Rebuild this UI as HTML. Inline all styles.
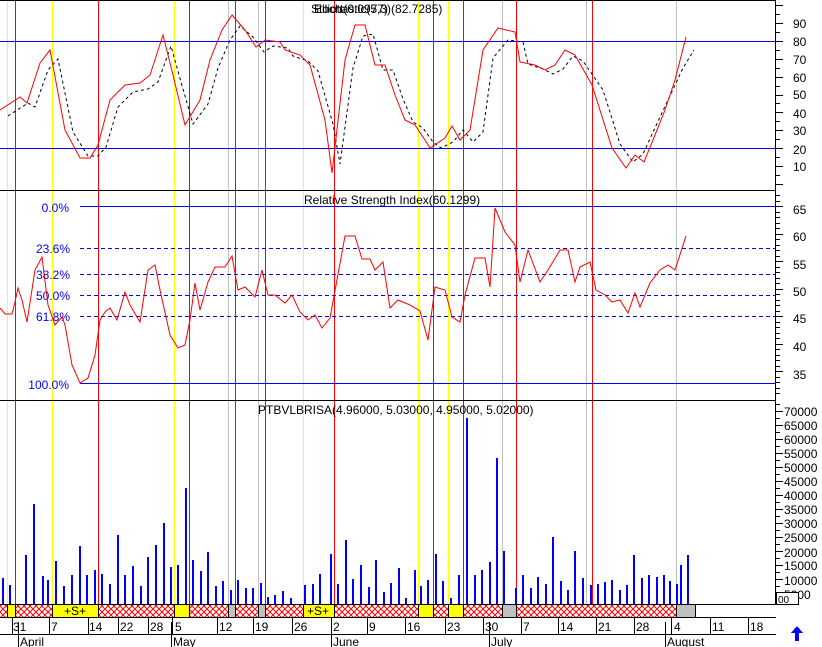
<!DOCTYPE html>
<html><head><meta charset="utf-8"><style>
html,body{margin:0;padding:0;background:#fff;}
svg{display:block;font-family:"Liberation Sans",Arial,sans-serif;}
</style></head><body>
<svg width="822" height="647" viewBox="0 0 822 647" xmlns="http://www.w3.org/2000/svg" shape-rendering="crispEdges">
<rect width="822" height="647" fill="#fff"/>
<!-- verticals -->
<g stroke-width="1">
<g stroke="#ffff00"><line x1="7.5" y1="0" x2="7.5" y2="604"/><line x1="52.5" y1="0" x2="52.5" y2="604"/><line x1="174.5" y1="0" x2="174.5" y2="604"/><line x1="303.5" y1="0" x2="303.5" y2="604"/><line x1="418.5" y1="0" x2="418.5" y2="604"/><line x1="448.5" y1="0" x2="448.5" y2="604"/></g>
<g stroke="#c0c0c0"><line x1="228.5" y1="0" x2="228.5" y2="604"/><line x1="258.5" y1="0" x2="258.5" y2="604"/><line x1="502.5" y1="0" x2="502.5" y2="604"/><line x1="586.5" y1="0" x2="586.5" y2="604"/><line x1="676.5" y1="0" x2="676.5" y2="604"/></g>
<g stroke="#ff0000"><line x1="15.5" y1="0" x2="15.5" y2="604"/><line x1="98.5" y1="0" x2="98.5" y2="604"/><line x1="189.5" y1="0" x2="189.5" y2="604"/><line x1="235.5" y1="0" x2="235.5" y2="604"/><line x1="265.5" y1="0" x2="265.5" y2="604"/><line x1="334.5" y1="0" x2="334.5" y2="604"/><line x1="433.5" y1="0" x2="433.5" y2="604"/><line x1="463.5" y1="0" x2="463.5" y2="604"/><line x1="516.5" y1="0" x2="516.5" y2="604"/><line x1="592.5" y1="0" x2="592.5" y2="604"/></g>
</g>
<!-- frame lines -->
<g stroke="#000">
<line x1="0" y1="0.5" x2="776" y2="0.5"/>
<line x1="0" y1="190.5" x2="776" y2="190.5"/>
<line x1="0" y1="400.5" x2="776" y2="400.5"/>
<line x1="775.5" y1="0" x2="775.5" y2="604"/>
<line x1="0" y1="604.5" x2="776" y2="604.5"/>
<line x1="0" y1="617.5" x2="776" y2="617.5"/>
<line x1="0" y1="634.5" x2="776" y2="634.5"/>
</g>
<!-- stochastic -->
<g stroke="#0000ff"><line x1="0" y1="41.5" x2="775" y2="41.5"/><line x1="0" y1="148.5" x2="775" y2="148.5"/></g>
<g shape-rendering="auto">
<polyline fill="none" stroke="#000" stroke-dasharray="3,3" transform="translate(8,4)" points="0,112 20,99 27,103 40,66 50,55 65,128 80,152 90,152 98,143 110,103 125,88 140,85 150,78 163,42 173,78 185,120 200,100 210,64 222,36 232,22 245,33 256,48 265,42 280,44 285,52 300,57 310,67 325,120 332,160 345,64 355,32 365,30 375,66 385,66 395,95 405,118 415,124 425,138 433,144 445,138 455,126 465,138 475,128 485,54 500,36 515,38 520,60 535,65 545,70 555,65 565,52 575,57 595,86 612,140 625,158 635,150 645,128 660,96 675,64 686,46"/>
<polyline fill="none" stroke="#ff0000" points="0,110 20,97 27,103 40,63 50,50 65,130 80,158 90,158 98,145 110,100 125,85 140,83 150,75 163,35 173,75 185,125 200,100 210,60 222,30 232,15 245,30 256,47 265,40 280,42 285,50 300,55 310,65 325,120 332,173 345,60 355,25 365,25 375,65 385,65 395,95 405,120 415,125 425,140 430,148 445,138 452,126 460,140 470,130 483,50 498,28 515,32 520,62 535,65 545,70 555,65 565,50 575,55 592,85 612,148 626,168 635,155 644,162 655,135 665,110 675,80 686,37"/>
</g>
<text x="311" y="13" font-size="12">Stochastic(5,3)(82.7285)</text>
<text x="314" y="13" font-size="12">Elliott(0.0977)</text>
<!-- RSI -->
<g stroke="#0000ff"><line x1="80" y1="206.5" x2="775" y2="206.5"/><line x1="80" y1="383.5" x2="775" y2="383.5"/></g>
<g stroke="#0000ff" stroke-dasharray="4,3"><line x1="80" y1="248.5" x2="775" y2="248.5"/><line x1="80" y1="274.5" x2="775" y2="274.5"/><line x1="80" y1="295.5" x2="775" y2="295.5"/><line x1="80" y1="316.5" x2="775" y2="316.5"/></g>
<g fill="#0000ff" font-size="12" text-anchor="end"><text x="69" y="212">0.0%</text><text x="70" y="253">23.6%</text><text x="70" y="279">38.2%</text><text x="70" y="300">50.0%</text><text x="70" y="321">61.8%</text><text x="69" y="389">100.0%</text></g>
<text x="304" y="204" font-size="12">Relative Strength Index(60.1299)</text>
<polyline shape-rendering="auto" fill="none" stroke="#ff0000" points="0,308 5,314 12,314 15,302 18,288 22,300 27,322 35,270 42,257 48,305 55,325 62,317 65,325 72,365 80,383 88,378 95,355 100,320 105,312 110,308 117,320 125,292 130,305 140,322 148,270 155,265 160,290 170,335 178,348 185,345 190,320 195,283 200,310 208,282 215,267 225,267 232,256 238,290 245,287 255,297 262,270 268,295 275,295 285,303 292,295 300,312 308,320 315,315 322,328 330,318 345,236 355,236 362,259 370,259 375,270 383,262 390,308 398,300 410,305 420,311 428,340 435,287 445,290 452,317 460,322 465,295 475,258 485,258 490,287 495,208 505,232 515,245 520,282 528,250 540,282 548,270 560,250 568,250 575,282 580,267 590,262 596,290 605,295 612,302 620,300 628,313 635,293 640,307 650,283 660,270 668,265 675,270 686,236"/>
<!-- volume -->
<text x="258" y="414" font-size="12">PTBVLBRISA(4.96000, 5.03000, 4.95000, 5.02000)</text>
<g stroke="#0000ff" stroke-width="2">
<line x1="3" y1="578" x2="3" y2="604"/><line x1="10" y1="585" x2="10" y2="604"/><line x1="26" y1="555" x2="26" y2="604"/><line x1="34" y1="504" x2="34" y2="604"/><line x1="43" y1="576" x2="43" y2="604"/><line x1="48" y1="580" x2="48" y2="604"/><line x1="56" y1="561" x2="56" y2="604"/><line x1="64" y1="586" x2="64" y2="604"/><line x1="72" y1="575" x2="72" y2="604"/><line x1="80" y1="546" x2="80" y2="604"/><line x1="87" y1="575" x2="87" y2="604"/><line x1="95" y1="570" x2="95" y2="604"/><line x1="102" y1="574" x2="102" y2="604"/><line x1="110" y1="584" x2="110" y2="604"/><line x1="118" y1="535" x2="118" y2="604"/><line x1="125" y1="575" x2="125" y2="604"/><line x1="133" y1="566" x2="133" y2="604"/><line x1="141" y1="586" x2="141" y2="604"/><line x1="148" y1="557" x2="148" y2="604"/><line x1="156" y1="545" x2="156" y2="604"/><line x1="164" y1="523" x2="164" y2="604"/><line x1="171" y1="567" x2="171" y2="604"/><line x1="178" y1="565" x2="178" y2="604"/><line x1="186" y1="488" x2="186" y2="604"/><line x1="193" y1="560" x2="193" y2="604"/><line x1="201" y1="571" x2="201" y2="604"/><line x1="208" y1="552" x2="208" y2="604"/><line x1="216" y1="586" x2="216" y2="604"/><line x1="223" y1="581" x2="223" y2="604"/><line x1="231" y1="590" x2="231" y2="604"/><line x1="238" y1="580" x2="238" y2="604"/><line x1="246" y1="588" x2="246" y2="604"/><line x1="253" y1="588" x2="253" y2="604"/><line x1="261" y1="583" x2="261" y2="604"/><line x1="268" y1="597" x2="268" y2="604"/><line x1="275" y1="595" x2="275" y2="604"/><line x1="283" y1="591" x2="283" y2="604"/><line x1="291" y1="598" x2="291" y2="604"/><line x1="305" y1="585" x2="305" y2="604"/><line x1="313" y1="584" x2="313" y2="604"/><line x1="320" y1="574" x2="320" y2="604"/><line x1="331" y1="554" x2="331" y2="604"/><line x1="338" y1="584" x2="338" y2="604"/><line x1="346" y1="540" x2="346" y2="604"/><line x1="353" y1="579" x2="353" y2="604"/><line x1="361" y1="565" x2="361" y2="604"/><line x1="369" y1="587" x2="369" y2="604"/><line x1="376" y1="560" x2="376" y2="604"/><line x1="384" y1="592" x2="384" y2="604"/><line x1="391" y1="583" x2="391" y2="604"/><line x1="399" y1="568" x2="399" y2="604"/><line x1="406" y1="598" x2="406" y2="604"/><line x1="415" y1="570" x2="415" y2="604"/><line x1="421" y1="586" x2="421" y2="604"/><line x1="428" y1="580" x2="428" y2="604"/><line x1="436" y1="554" x2="436" y2="604"/><line x1="443" y1="581" x2="443" y2="604"/><line x1="451" y1="598" x2="451" y2="604"/><line x1="459" y1="575" x2="459" y2="604"/><line x1="467" y1="418" x2="467" y2="604"/><line x1="475" y1="575" x2="475" y2="604"/><line x1="482" y1="570" x2="482" y2="604"/><line x1="490" y1="562" x2="490" y2="604"/><line x1="497" y1="458" x2="497" y2="604"/><line x1="504" y1="551" x2="504" y2="604"/><line x1="516" y1="588" x2="516" y2="604"/><line x1="523" y1="575" x2="523" y2="604"/><line x1="531" y1="588" x2="531" y2="604"/><line x1="538" y1="577" x2="538" y2="604"/><line x1="546" y1="584" x2="546" y2="604"/><line x1="553" y1="537" x2="553" y2="604"/><line x1="561" y1="581" x2="561" y2="604"/><line x1="568" y1="590" x2="568" y2="604"/><line x1="575" y1="551" x2="575" y2="604"/><line x1="583" y1="578" x2="583" y2="604"/><line x1="591" y1="585" x2="591" y2="604"/><line x1="598" y1="584" x2="598" y2="604"/><line x1="605" y1="582" x2="605" y2="604"/><line x1="612" y1="580" x2="612" y2="604"/><line x1="620" y1="590" x2="620" y2="604"/><line x1="627" y1="585" x2="627" y2="604"/><line x1="634" y1="555" x2="634" y2="604"/><line x1="642" y1="578" x2="642" y2="604"/><line x1="649" y1="575" x2="649" y2="604"/><line x1="657" y1="577" x2="657" y2="604"/><line x1="664" y1="575" x2="664" y2="604"/><line x1="670" y1="581" x2="670" y2="604"/><line x1="677" y1="584" x2="677" y2="604"/><line x1="681" y1="565" x2="681" y2="604"/><line x1="688" y1="555" x2="688" y2="604"/>
</g>
<!-- band -->
<defs><pattern id="hx" width="6" height="6" patternUnits="userSpaceOnUse"><rect width="6" height="6" fill="#fff"/><path d="M0 0L6 6M6 0L0 6" stroke="#ff0000" stroke-width="1" shape-rendering="auto"/></pattern></defs>
<rect x="0" y="605" width="695" height="12" fill="url(#hx)"/>
<g fill="#ffff00" stroke="#000"><rect x="7.5" y="604.5" width="8" height="13"/><rect x="52.5" y="604.5" width="46" height="13"/><rect x="174.5" y="604.5" width="15" height="13"/><rect x="303.5" y="604.5" width="31" height="13"/><rect x="418.5" y="604.5" width="15" height="13"/><rect x="448.5" y="604.5" width="15" height="13"/></g>
<g fill="#c0c0c0" stroke="#000"><rect x="228.5" y="604.5" width="7" height="13"/><rect x="258.5" y="604.5" width="7" height="13"/><rect x="502.5" y="604.5" width="14" height="13"/><rect x="676.5" y="604.5" width="19" height="13"/></g>
<g font-size="12" text-anchor="middle"><text x="75" y="615">+S+</text><text x="318" y="615">+S+</text></g>
<!-- dates -->
<g stroke="#000"><line x1="12.5" y1="617" x2="12.5" y2="634"/><line x1="49.5" y1="617" x2="49.5" y2="634"/><line x1="88.5" y1="617" x2="88.5" y2="634"/><line x1="118.5" y1="617" x2="118.5" y2="634"/><line x1="148.5" y1="617" x2="148.5" y2="634"/><line x1="172.5" y1="617" x2="172.5" y2="634"/><line x1="217.5" y1="617" x2="217.5" y2="634"/><line x1="253.5" y1="617" x2="253.5" y2="634"/><line x1="292.5" y1="617" x2="292.5" y2="634"/><line x1="331.5" y1="617" x2="331.5" y2="634"/><line x1="367.5" y1="617" x2="367.5" y2="634"/><line x1="405.5" y1="617" x2="405.5" y2="634"/><line x1="445.5" y1="617" x2="445.5" y2="634"/><line x1="483.5" y1="617" x2="483.5" y2="634"/><line x1="521.5" y1="617" x2="521.5" y2="634"/><line x1="558.5" y1="617" x2="558.5" y2="634"/><line x1="596.5" y1="617" x2="596.5" y2="634"/><line x1="634.5" y1="617" x2="634.5" y2="634"/><line x1="671.5" y1="617" x2="671.5" y2="634"/><line x1="710.5" y1="617" x2="710.5" y2="634"/><line x1="748.5" y1="617" x2="748.5" y2="634"/>
<line x1="18.5" y1="622" x2="18.5" y2="647"/><line x1="171.5" y1="622" x2="171.5" y2="647"/><line x1="331.5" y1="622" x2="331.5" y2="647"/><line x1="489.5" y1="622" x2="489.5" y2="647"/><line x1="665.5" y1="622" x2="665.5" y2="647"/></g>
<g font-size="12"><text x="13" y="631">31</text><text x="51" y="631">7</text><text x="89" y="631">14</text><text x="120" y="631">22</text><text x="150" y="631">28</text><text x="175" y="631">5</text><text x="219" y="631">12</text><text x="255" y="631">19</text><text x="294" y="631">26</text><text x="333" y="631">2</text><text x="369" y="631">9</text><text x="407" y="631">16</text><text x="447" y="631">23</text><text x="485" y="631">30</text><text x="523" y="631">7</text><text x="560" y="631">14</text><text x="598" y="631">21</text><text x="636" y="631">28</text><text x="674" y="631">4</text><text x="712" y="631">11</text><text x="750" y="631">18</text>
<text x="20" y="646">April</text><text x="173" y="646">May</text><text x="333" y="646">June</text><text x="491" y="646">July</text><text x="667" y="646">August</text></g>
<!-- right axis -->
<g stroke="#000">
<path d="M776 5.5h7M776 14.5h4M776 23.5h7M776 32.5h4M776 41.5h7M776 50.5h4M776 59.5h7M776 68.5h4M776 77.5h7M776 86.5h4M776 95.5h7M776 103.5h4M776 112.5h7M776 121.5h4M776 130.5h7M776 139.5h4M776 148.5h7M776 157.5h4M776 166.5h7M776 175.5h4M776 184.5h7"/>
<path d="M776 195.5h4M776 201.5h4M776 206.5h7M776 212.5h4M776 217.5h4M776 223.5h4M776 228.5h4M776 234.5h7M776 239.5h4M776 245.5h4M776 250.5h4M776 256.5h4M776 261.5h7M776 267.5h4M776 272.5h4M776 278.5h4M776 283.5h4M776 289.5h7M776 294.5h4M776 300.5h4M776 305.5h4M776 311.5h4M776 316.5h7M776 322.5h4M776 327.5h4M776 333.5h4M776 338.5h4M776 344.5h7M776 349.5h4M776 355.5h4M776 360.5h4M776 366.5h4M776 371.5h7M776 377.5h4M776 382.5h4M776 388.5h4M776 393.5h4"/>
<path d="M776 404.5h4M776 411.5h7M776 418.5h4M776 425.5h7M776 432.5h4M776 439.5h7M776 446.5h4M776 453.5h7M776 460.5h4M776 467.5h7M776 474.5h4M776 481.5h7M776 488.5h4M776 495.5h7M776 502.5h4M776 509.5h7M776 516.5h4M776 523.5h7M776 530.5h4M776 537.5h7M776 544.5h4M776 551.5h7M776 558.5h4M776 565.5h7M776 572.5h4M776 579.5h7M776 586.5h4M776 593.5h7M776 600.5h4"/>
</g>
<g font-size="12"><text x="793" y="28">90</text><text x="793" y="46">80</text><text x="793" y="64">70</text><text x="793" y="82">60</text><text x="793" y="99">50</text><text x="793" y="118">40</text><text x="793" y="135">30</text><text x="793" y="154">20</text><text x="793" y="171">10</text>
<text x="793" y="214">65</text><text x="793" y="241">60</text><text x="793" y="269">55</text><text x="793" y="296">50</text><text x="793" y="323">45</text><text x="793" y="351">40</text><text x="793" y="379">35</text></g>
<g font-size="12"><text x="784" y="416">70000</text><text x="784" y="430">65000</text><text x="784" y="444">60000</text><text x="784" y="458">55000</text><text x="784" y="472">50000</text><text x="784" y="486">45000</text><text x="784" y="500">40000</text><text x="784" y="514">35000</text><text x="784" y="528">30000</text><text x="784" y="542">25000</text><text x="784" y="557">20000</text><text x="784" y="570">15000</text><text x="784" y="585">10000</text><text x="784" y="599">5000</text></g>
<rect x="776.5" y="592.5" width="22" height="12" fill="#fff" stroke="#000"/>
<text x="778" y="603" font-size="10">00</text>
<!-- arrow -->
<path d="M797 626l-6 7h4v8h4v-8h4z" fill="#0000ff"/>
</svg>
</body></html>
